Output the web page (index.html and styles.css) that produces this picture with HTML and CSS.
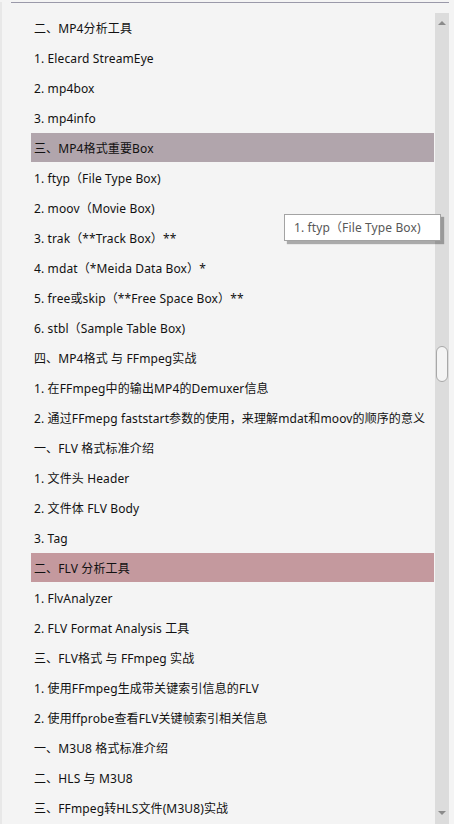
FILE: index.html
```html
<!DOCTYPE html>
<html lang="zh-CN">
<head>
<meta charset="utf-8">
<title>目录</title>
<link rel="stylesheet" href="styles.css">
</head>
<body>
<div class="page">
  <div class="topline"></div>
  <div class="main">
    <ul class="toc">
      <li class="item">二、MP4分析工具</li>
      <li class="item">1. Elecard StreamEye</li>
      <li class="item">2. mp4box</li>
      <li class="item">3. mp4info</li>
      <li class="item hl-grey">三、MP4格式重要Box</li>
      <li class="item">1. ftyp（File Type Box)</li>
      <li class="item">2. moov（Movie Box)</li>
      <li class="item">3. trak（**Track Box）**</li>
      <li class="item">4. mdat（*Meida Data Box）*</li>
      <li class="item">5. free或skip（**Free Space Box）**</li>
      <li class="item">6. stbl（Sample Table Box)</li>
      <li class="item">四、MP4格式 与 FFmpeg实战</li>
      <li class="item">1. 在FFmpeg中的输出MP4的Demuxer信息</li>
      <li class="item">2. 通过FFmepg faststart参数的使用，来理解mdat和moov的顺序的意义</li>
      <li class="item">一、FLV 格式标准介绍</li>
      <li class="item">1. 文件头 Header</li>
      <li class="item">2. 文件体 FLV Body</li>
      <li class="item">3. Tag</li>
      <li class="item hl-rose">二、FLV 分析工具</li>
      <li class="item">1. FlvAnalyzer</li>
      <li class="item">2. FLV Format Analysis 工具</li>
      <li class="item">三、FLV格式 与 FFmpeg 实战</li>
      <li class="item">1. 使用FFmpeg生成带关键索引信息的FLV</li>
      <li class="item">2. 使用ffprobe查看FLV关键帧索引相关信息</li>
      <li class="item">一、M3U8 格式标准介绍</li>
      <li class="item">二、HLS 与 M3U8</li>
      <li class="item">三、FFmpeg转HLS文件(M3U8)实战</li>
    </ul>
    <div class="scrollbar">
      <div class="arrow-up"></div>
      <div class="track"><div class="thumb"></div></div>
      <div class="arrow-down"></div>
    </div>
  </div>
  <div class="tooltip">1. ftyp（File Type Box)</div>
</div>
</body>
</html>
```

FILE: styles.css
```css
html, body {
  margin: 0;
  padding: 0;
  height: 100%;
  overflow: hidden;
}
body {
  background: #f4f4f4;
  font-family: "Noto Sans", "Noto Sans CJK SC", sans-serif;
  font-size: 12px;
  letter-spacing: 0.12px;
  color: #111111;
}
.page {
  position: relative;
  height: 824px;
  border-left: 2px solid #e8e8e8;
  box-sizing: border-box;
}
.topline {
  margin: 2px 5px 0 9px;
  height: 1px;
  background: #9a99a9;
}
.main {
  display: flex;
  margin-top: 10px;
  padding-left: 29px;
  gap: 1px;
}
.toc {
  list-style: none;
  margin: 0;
  padding: 0;
  width: 403px;
}
.item {
  height: 29px;
  margin-bottom: 1px;
  line-height: 31px;
  padding-left: 3px;
  white-space: nowrap;
  overflow: hidden;
}
.hl-grey { background: #b1a5ac; }
.hl-rose { background: #c4999e; }
.scrollbar {
  width: 14px;
  height: 811px;
  background: #dcdcdc;
  display: flex;
  flex-direction: column;
  align-items: center;
}
.arrow-up {
  margin-top: 8px;
  width: 0;
  height: 0;
  border-left: 4px solid transparent;
  border-right: 4px solid transparent;
  border-bottom: 4px solid #8a8a8a;
}
.track {
  flex: 1;
  width: 14px;
  position: relative;
}
.thumb {
  position: absolute;
  left: 1px;
  top: 321px;
  width: 10px;
  height: 34px;
  border: 1px solid #a8a8a8;
  border-radius: 6px;
  background: #f4f4f4;
}
.arrow-down {
  margin-bottom: 9px;
  width: 0;
  height: 0;
  border-left: 4px solid transparent;
  border-right: 4px solid transparent;
  border-top: 4px solid #8a8a8a;
}
.tooltip {
  position: absolute;
  left: 282px;
  top: 212px;
  width: 146px;
  height: 25px;
  padding-left: 9px;
  line-height: 26px;
  background: #ffffff;
  border: 1px solid #a3a3a3;
  box-shadow: 3px 3px 1px rgba(0,0,0,0.3);
  color: #585858;
  font-size: 12px;
  white-space: nowrap;
}
```
